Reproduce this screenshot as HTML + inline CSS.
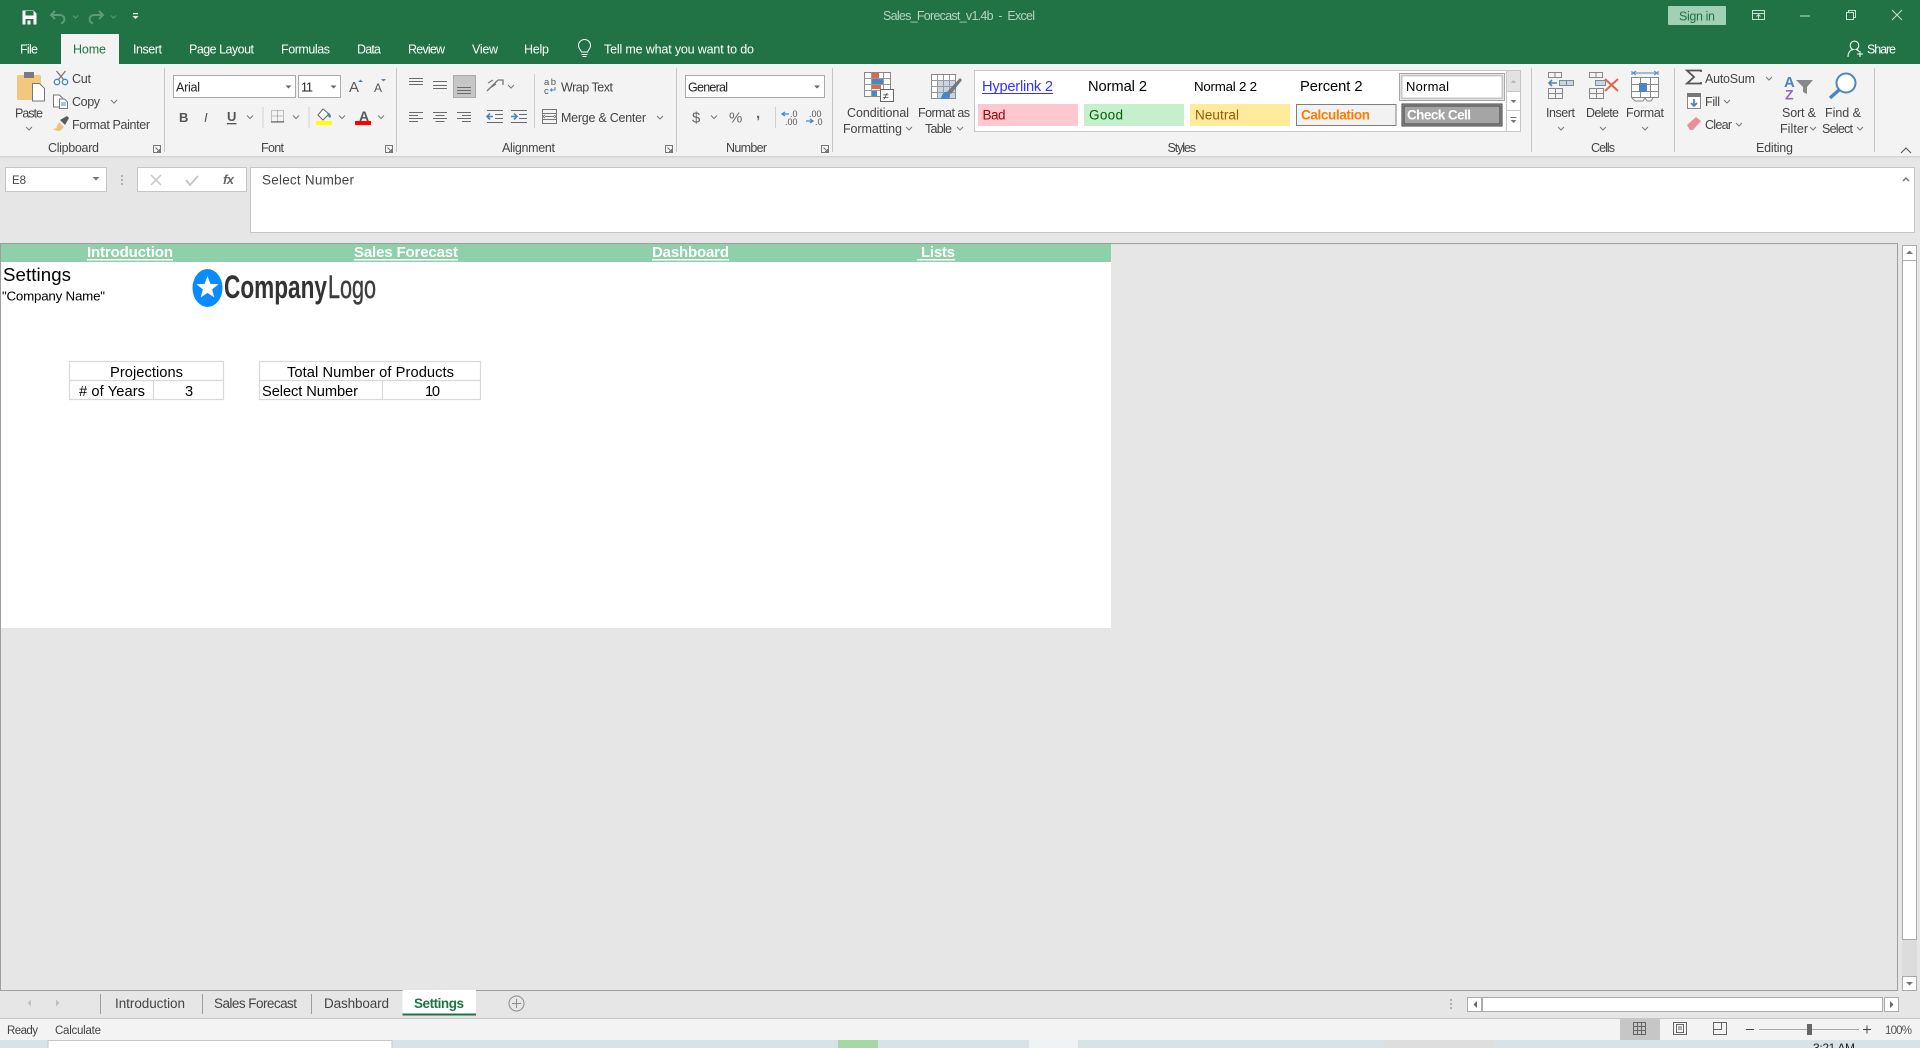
<!DOCTYPE html>
<html lang="en"><head><meta charset="utf-8"><title>Sales_Forecast_v1.4b - Excel</title>
<style>
html,body{margin:0;padding:0;width:1920px;height:1048px;overflow:hidden;background:#e6e6e6}
svg{display:block}
text{font-family:"Liberation Sans",Arial,sans-serif;white-space:pre}
.u{font-size:12.5px;fill:#444}
.t{font-size:12.5px;fill:#fff}
.a{font-size:14.67px;fill:#000}
.n{font-size:15px;font-weight:bold;fill:#fff}
.l{fill:none;stroke:#6a6a6a;stroke-width:1}
.c{fill:none;stroke:#777;stroke-width:1}
.b{fill:#fff;stroke:#ababab;stroke-width:1}
</style></head><body>
<svg width="1920" height="1048" viewBox="0 0 1920 1048" xmlns="http://www.w3.org/2000/svg" shape-rendering="geometricPrecision">
<!-- backgrounds -->
<rect width="1920" height="1048" fill="#e6e6e6"/>
<rect width="1920" height="64" fill="#217346"/>
<rect y="64" width="1920" height="92" fill="#f3f3f3"/>
<rect y="156" width="1920" height="1.5" fill="#d4d4d4"/>

<!-- QAT -->
<path d="M22.5 10.5h11l3 3v11h-14z" fill="#fff"/><rect x="25.5" y="11" width="8" height="4.5" fill="#217346"/><rect x="25.5" y="19" width="8" height="5.5" fill="#217346"/><rect x="27.5" y="20.5" width="3" height="4" fill="#fff"/>
<path d="M55 11l-4 4 4 4M51.5 15h8c6 0 6.5 7 1.5 8.5" fill="none" stroke="#5f9a7a" stroke-width="2"/>
<path d="M73 15.5l2.5 2.5 2.5-2.5" fill="none" stroke="#5f9a7a"/>
<path d="M99 11l4 4-4 4M102.5 15h-8c-6 0-6.5 7-1.5 8.5" fill="none" stroke="#5f9a7a" stroke-width="2"/>
<path d="M111 15.5l2.5 2.5 2.5-2.5" fill="none" stroke="#5f9a7a"/>
<rect x="133" y="13" width="5" height="1.2" fill="#fff"/><path d="M132.5 16h6l-3 3z" fill="#fff"/>

<!-- title -->
<text x="883" y="20" font-size="12.5" fill="#b4d3c1" textLength="152">Sales_Forecast_v1.4b  -  Excel</text>
<rect x="1668" y="6" width="58" height="19" rx="1" fill="#a1d1b4"/>
<text x="1679" y="20.5" font-size="12.5" fill="#217346" textLength="36">Sign in</text>
<rect x="1752.5" y="10.5" width="12" height="9" fill="none" stroke="#c9dfd2"/><path d="M1752 13.5h13M1758.5 19v-4M1756.5 16.5l2-2 2 2" fill="none" stroke="#c9dfd2"/>
<rect x="1800" y="15.5" width="10" height="1" fill="#c9dfd2"/>
<path d="M1846.5 12.5h7v7h-7zM1848.5 12.5v-2h7v7h-2" fill="none" stroke="#c9dfd2"/>
<path d="M1892 10l10 10M1902 10l-10 10" stroke="#c9dfd2" fill="none"/>

<!-- tabs -->
<rect x="61" y="34" width="58" height="30" fill="#f3f3f3"/>
<text class="t" x="20" y="53.5" textLength="18">File</text>
<text x="73" y="53.5" font-size="12.5" fill="#217346" textLength="33">Home</text>
<text class="t" x="133" y="53.5" textLength="29">Insert</text>
<text class="t" x="189" y="53.5" textLength="65">Page Layout</text>
<text class="t" x="281" y="53.5" textLength="49">Formulas</text>
<text class="t" x="357" y="53.5" textLength="24">Data</text>
<text class="t" x="408" y="53.5" textLength="37">Review</text>
<text class="t" x="472" y="53.5" textLength="26">View</text>
<text class="t" x="524" y="53.5" textLength="25">Help</text>
<path d="M581.5 52c-1-2.500-3-3.500-3-6.500a6 6 0 0 1 12 0c0 3-2 4-3 6.500zM581.500 54.500h6M582.500 56.500h4" fill="none" stroke="#fff"/>
<text class="t" x="604" y="53.5" textLength="150">Tell me what you want to do</text>
<path d="M1848 57c0-5 2.500-7 5-7.500a4.300 4.300 0 1 1 3 0c1.500.4 2.500 1 3 2M1857 54h6M1860 51v6" fill="none" stroke="#fff"/>
<text class="t" x="1867" y="53.5" textLength="29">Share</text>

<!-- group separators -->
<g fill="#c6c6c6"><rect x="164" y="68" width="1" height="84"/><rect x="396" y="68" width="1" height="84"/><rect x="676" y="68" width="1" height="84"/><rect x="832" y="68" width="1" height="84"/><rect x="1531" y="68" width="1" height="84"/><rect x="1674" y="68" width="1" height="84"/><rect x="1874" y="68" width="1" height="84"/></g>

<!-- Clipboard -->
<rect x="17" y="75" width="24" height="25" rx="1.500" fill="#f0c97f"/><rect x="24" y="72" width="10" height="6" fill="#7a7a7a"/>
<path d="M32.500 83.500h7l5 5v12.500h-12z" fill="#fff" stroke="#777"/>
<text class="u" x="15" y="117.500" textLength="28">Paste</text><path class="c" d="M26 127l3 3 3-3"/>
<circle cx="57" cy="82" r="2.700" fill="none" stroke="#4a87c0" stroke-width="1.300"/><circle cx="65" cy="82" r="2.700" fill="none" stroke="#4a87c0" stroke-width="1.300"/>
<path d="M56.500 71l7.500 9M65.500 71l-7.500 9" stroke="#777" stroke-width="1.300" fill="none"/>
<text class="u" x="72" y="83" textLength="19">Cut</text>
<path d="M53.500 95h6l3 3v9h-9z" fill="#fff" stroke="#777"/><path d="M59.500 99h5l3 3v6.500h-8z" fill="#fff" stroke="#777"/><path d="M61 103h5M61 105h5" stroke="#4a87c0"/>
<text class="u" x="72" y="106" textLength="28">Copy</text><path class="c" d="M111 100l3 3 3-3"/>
<path d="M59 122l5 5-4 4c-3 0-6-1-7-2 2 0 4-1 4-3z" fill="#edc27c"/><path d="M60 120l7-4 2 2-4 7z" fill="#5b5b5b"/>
<text class="u" x="72" y="129" textLength="78">Format Painter</text>
<text class="u" x="48" y="152" textLength="51">Clipboard</text>
<path d="M153.500 145.500h7v7h-7zM155.500 147.500l4 4M159.500 149v2.500h-2.500" fill="none" stroke="#777"/>

<!-- Font -->
<rect class="b" x="173.500" y="75.500" width="122" height="22"/><rect class="b" x="298.500" y="75.500" width="42" height="22"/>
<text x="176" y="91.500" font-size="12.500" fill="#222" textLength="24">Arial</text>
<text x="301" y="91.500" font-size="12.500" fill="#222" textLength="12">11</text>
<path d="M285.500 85.500h6l-3 3z" fill="#666"/><path d="M330.500 85.500h6l-3 3z" fill="#666"/>
<text x="349" y="92" font-size="15" fill="#555" textLength="10">A</text><path d="M358 82h5l-2.500-2.500z" fill="#4a87c0"/>
<text x="374" y="92" font-size="12" fill="#555" textLength="9">A</text><path d="M381 79h5l-2.500 2.500z" fill="#4a87c0"/>
<text x="179" y="122" font-size="13" font-weight="bold" fill="#555" textLength="9">B</text>
<text x="204" y="122" font-size="13" font-style="italic" fill="#555" textLength="7" font-family="Liberation Serif">I</text>
<text x="227" y="121" font-size="13" font-weight="bold" fill="#555" textLength="9">U</text><rect x="227" y="123" width="9.500" height="1.300" fill="#555"/>
<path class="c" d="M247 115.500l3 3 3-3"/>
<rect x="262.500" y="107" width="1" height="21" fill="#d0d0d0"/>
<path d="M271.500 110.500h12v11h-12zM277.500 110.500v11M271.500 116h12" fill="none" stroke="#888" stroke-dasharray="1 1"/><rect x="271" y="121.500" width="13" height="1" fill="#555"/>
<path class="c" d="M293 115.500l3 3 3-3"/>
<rect x="308.500" y="107" width="1" height="21" fill="#d0d0d0"/>
<path d="M323 109l-5 6 5 5 6-6z" fill="#fff" stroke="#666"/><path d="M327 113c2-1 4 1 4 4-1 1-2 1-3-1z" fill="#4a87c0"/><rect x="316" y="121" width="16" height="4" fill="#ff0"/>
<path class="c" d="M339 115.500l3 3 3-3"/>
<text x="359" y="121" font-size="14" font-weight="bold" fill="#555" textLength="10">A</text><rect x="355" y="121" width="16" height="4" fill="#f00"/>
<path class="c" d="M378 115.500l3 3 3-3"/>
<text class="u" x="261" y="152" textLength="23">Font</text>
<path d="M385.500 145.500h7v7h-7zM387.500 147.500l4 4M391.500 149v2.500h-2.500" fill="none" stroke="#777"/>

<!-- Alignment -->
<path class="l" d="M409 78.500h14M409 81.500h14M409 84.500h14M433 81.500h14M433 85.500h14M433 88.500h14"/>
<rect x="453.500" y="75.500" width="22" height="22" fill="#c6c6c6" stroke="#ababab"/>
<path class="l" d="M457 87.500h14M457 90.500h14M457 93.500h14"/>
<path class="l" d="M409 112.500h14M409 115.500h9M409 118.500h14M409 121.500h9M433 112.500h14M435.500 115.500h9M433 118.500h14M435.500 121.500h9M457 112.500h14M462 115.500h9M457 118.500h14M462 121.500h9"/>
<path d="M487 91l11-11M498 80h5v5M488 83l5-3M490 88l6-4" fill="none" stroke="#777" stroke-width="1.300"/><path class="c" d="M508 85l3 3 3-3"/>
<path d="M487 116.500h6M490 113.500l-3 3 3 3" fill="none" stroke="#4a87c0" stroke-width="1.600"/><path class="l" d="M487 110.500h16M495 114.500h8M495 118.500h8M487 122.500h16"/>
<path d="M511 116.500h6M514 113.500l3 3-3 3" fill="none" stroke="#4a87c0" stroke-width="1.600"/><path class="l" d="M511 110.500h16M519 114.500h8M519 118.500h8M511 122.500h16"/>
<rect x="534" y="74" width="1" height="54" fill="#d0d0d0"/>
<text x="544" y="85" font-size="9.500" fill="#555" textLength="12">ab</text><text x="544" y="94" font-size="9.500" fill="#555">c</text><path d="M555 87v3h-4M552 88.500l-1.500 1.500 1.500 1.500" fill="none" stroke="#4a87c0"/>
<text class="u" x="561" y="91.500" textLength="52">Wrap Text</text>
<path d="M542.500 109.500h14v14h-14zM542.500 113.500h14M542.500 119.500h14M545 116.500h9M545 115l-2 1.500 2 1.500M554 115l2 1.500-2 1.500" fill="none" stroke="#777"/>
<text class="u" x="561" y="122" textLength="85">Merge &amp; Center</text><path class="c" d="M657 116l3 3 3-3"/>
<text class="u" x="502" y="152" textLength="53">Alignment</text>
<path d="M665.500 145.500h7v7h-7zM667.500 147.500l4 4M671.500 149v2.500h-2.500" fill="none" stroke="#777"/>

<!-- Number -->
<rect class="b" x="685.500" y="75.500" width="139" height="22"/>
<text x="688" y="91.500" font-size="12.500" fill="#222" textLength="40">General</text><path d="M814 85.500h6l-3 3z" fill="#666"/>
<text x="692" y="122.500" font-size="15" fill="#666" textLength="10">$</text><path class="c" d="M711 115.500l3 3 3-3"/>
<text x="729" y="122.500" font-size="15" fill="#666" textLength="13">%</text>
<text x="756" y="118" font-size="15" fill="#666" font-weight="bold">,</text>
<rect x="775" y="107" width="1" height="21" fill="#d0d0d0"/>
<text x="790" y="117" font-size="9" fill="#555">.0</text><text x="785" y="125" font-size="9" fill="#555">.00</text>
<path d="M782 114h7M785 112l-3 2 3 2" fill="none" stroke="#4a87c0" stroke-width="1.300"/>
<text x="809" y="117" font-size="9" fill="#555">.00</text><text x="815" y="125" font-size="9" fill="#555">.0</text>
<path d="M806 121h7M810 119l3 2-3 2" fill="none" stroke="#4a87c0" stroke-width="1.300"/>
<text class="u" x="726" y="152" textLength="41">Number</text>
<path d="M821.500 145.500h7v7h-7zM823.500 147.500l4 4M827.500 149v2.500h-2.500" fill="none" stroke="#777"/>

<!-- Conditional / Format as table -->
<rect x="864.500" y="72.500" width="26" height="24" fill="#fff" stroke="#888"/>
<rect x="872" y="73" width="7" height="5" fill="#d9694a"/><rect x="872" y="79" width="11" height="5" fill="#4a87c0"/><rect x="872" y="85" width="9" height="4" fill="#d9694a"/><rect x="872" y="90" width="5" height="6" fill="#4a87c0"/>
<path d="M871.500 73v24M864 78.500h26M864 84.500h26M864 90.500h26M883.500 73v24" stroke="#999" fill="none"/>
<rect x="880.500" y="89.500" width="13" height="12" fill="#fff" stroke="#666"/>
<text x="882.500" y="100" font-size="11.500" fill="#444">≠</text>
<text class="u" x="847" y="117" textLength="62">Conditional</text>
<text class="u" x="843" y="133" textLength="59">Formatting</text><path class="c" d="M906 127l3 3 3-3"/>
<rect x="931.500" y="74.500" width="24" height="24" fill="#fff" stroke="#888"/><rect x="937" y="80" width="18" height="18" fill="#c5d5ea"/>
<path d="M931 80.500h25M931 86.500h25M931 92.500h25M937.500 75v24M943.500 75v24M949.500 75v24" stroke="#999" fill="none"/>
<path d="M947 92l13-14 2 2-11 14z" fill="#777"/><path d="M945 92c3-1 5 1 5 3l-1 4h-8c0-3 2-6 4-7z" fill="#4a87c0"/>
<text class="u" x="918" y="117" textLength="52">Format as</text>
<text class="u" x="925" y="133" textLength="27">Table</text><path class="c" d="M957 127l3 3 3-3"/>

<!-- Styles gallery -->
<rect x="974.500" y="70.500" width="532" height="61" fill="#fff" stroke="#c6c6c6"/>
<text x="982" y="91" font-size="14.670" fill="#3333ff" textLength="71">Hyperlink 2</text><rect x="982" y="93" width="71" height="1" fill="#3333ff"/>
<text x="1088" y="91" font-size="14.670" fill="#000" textLength="59">Normal 2</text>
<text x="1194" y="91" font-size="13.300" fill="#000" textLength="63">Normal 2 2</text>
<text x="1300" y="91" font-size="14.670" fill="#000" textLength="62.500">Percent 2</text>
<rect x="1399.500" y="73.500" width="105" height="27" fill="#fff" stroke="#a5a5a5"/><rect x="1401.500" y="75.500" width="101" height="23" fill="#fff" stroke="#c6c6c6" stroke-width="2"/>
<text x="1406" y="91" font-size="13" fill="#000" textLength="43">Normal</text>
<rect x="978" y="104" width="100" height="22" fill="#ffc7ce"/><text x="982.500" y="119.500" font-size="13.500" fill="#9c0006" textLength="23">Bad</text>
<rect x="1084" y="104" width="100" height="22" fill="#c6efce"/><text x="1089" y="119.500" font-size="13.500" fill="#006100" textLength="34">Good</text>
<rect x="1190" y="104" width="100" height="22" fill="#ffeb9c"/><text x="1195" y="119.500" font-size="13.500" fill="#9c5700" textLength="44">Neutral</text>
<rect x="1296.500" y="104.500" width="99.500" height="21" fill="#f2f2f2" stroke="#7f7f7f"/><text x="1301" y="119.500" font-size="13.500" font-weight="bold" fill="#fa7d00" textLength="69">Calculation</text>
<rect x="1402" y="104" width="100" height="22" fill="#a5a5a5" stroke="#3f3f3f" stroke-width="1"/><rect x="1404" y="106" width="96" height="18" fill="none" stroke="#3f3f3f"/>
<text x="1407" y="119.500" font-size="13.500" font-weight="bold" fill="#fff" textLength="64">Check Cell</text>
<rect x="1506.500" y="70.500" width="14" height="21" fill="#e2e2e2" stroke="#c6c6c6"/><rect x="1506.500" y="91.500" width="14" height="19" fill="#fff" stroke="#c6c6c6"/><rect x="1506.500" y="110.500" width="14" height="21" fill="#fff" stroke="#c6c6c6"/>
<path d="M1510.500 83l3-3 3 3z" fill="#bbb"/><path d="M1510.500 100h6l-3 3z" fill="#777"/><rect x="1510.500" y="117" width="6" height="1" fill="#777"/><path d="M1510.500 120h6l-3 3z" fill="#777"/>
<text class="u" x="1167.500" y="152" textLength="28.500">Styles</text>

<!-- Cells -->
<g fill="none" stroke="#888"><path d="M1548.500 72.500h13v5h-13zM1555 72.500v5M1548.500 88.500h14v10h-14zM1555.500 88.500v10M1548.500 93.500h14"/>
<path d="M1559.500 80.500h14v5h-14zM1566.500 80.500v5" fill="#c5d5ea"/></g>
<path d="M1549 83h8M1552 80l-3 3 3 3" fill="none" stroke="#4a87c0" stroke-width="1.600"/>
<text class="u" x="1546" y="117" textLength="29">Insert</text><path class="c" d="M1558 127l3 3 3-3"/>
<g fill="none" stroke="#888"><path d="M1589.500 72.500h13v5h-13zM1596 72.500v5M1589.500 88.500h14v10h-14zM1596.500 88.500v10M1589.500 93.500h14"/>
<path d="M1595.500 80.500h10v5h-10z" fill="#c5d5ea"/></g>
<path d="M1605 79l13 12M1618 79l-13 12" stroke="#d9694a" stroke-width="2" fill="none"/>
<text class="u" x="1586" y="117" textLength="33">Delete</text><path class="c" d="M1600 127l3 3 3-3"/>
<path d="M1631.500 77.500h27v20h-27zM1640.500 77.500v20M1650.500 77.500v20M1631.500 84.500h27M1631.500 91.500h27" fill="#fff" stroke="#888"/>
<rect x="1639" y="83" width="8" height="9" fill="#4a87c0"/>
<path d="M1632 73h26M1632 71v4M1658 71v4M1636 71l-3 2 3 2M1654 71l3 2-3 2" fill="none" stroke="#4a87c0"/>
<path d="M1632 98l3 3h8l2-3 2 3h4l2-3" fill="none" stroke="#888"/>
<text class="u" x="1626" y="117" textLength="38">Format</text><path class="c" d="M1642 127l3 3 3-3"/>
<text class="u" x="1591" y="152" textLength="24">Cells</text>

<!-- Editing -->
<path d="M1701 72v-1.500h-14l7 6.500-7 6.500h14V82" fill="none" stroke="#555" stroke-width="1.800"/>
<text class="u" x="1705" y="83" textLength="50">AutoSum</text><path class="c" d="M1766 77l3 3 3-3"/>
<rect x="1687.500" y="93.500" width="13" height="15" fill="#fff" stroke="#888"/><rect x="1687" y="93" width="14" height="4" fill="#777"/><path d="M1694 99v7M1691 103l3 3 3-3" fill="none" stroke="#4a87c0" stroke-width="1.800"/>
<text class="u" x="1705" y="106" textLength="15">Fill</text><path class="c" d="M1724 100l3 3 3-3"/>
<path d="M1687 125l9-8 5 4-8 9h-3z" fill="#ec8d9c"/>
<text class="u" x="1705" y="129" textLength="27">Clear</text><path class="c" d="M1736 123l3 3 3-3"/>
<text x="1784" y="87" font-size="15" font-weight="bold" fill="#4a87c0" textLength="11">A</text>
<text x="1785" y="99.500" font-size="14" font-weight="bold" fill="#9966bb" textLength="10">Z</text>
<path d="M1796 80h17l-6 7v7l-4-2v-5z" fill="#888"/>
<text class="u" x="1782" y="117" textLength="34">Sort &amp;</text>
<text class="u" x="1780" y="133" textLength="28">Filter</text><path class="c" d="M1810 127l3 3 3-3"/>
<circle cx="1846" cy="83" r="9.500" fill="#fff" stroke="#4a87c0" stroke-width="2"/><path d="M1839 90l-9 8" stroke="#4a87c0" stroke-width="3.500" fill="none"/>
<text class="u" x="1825" y="117" textLength="36">Find &amp;</text>
<text class="u" x="1822" y="133" textLength="31">Select</text><path class="c" d="M1857 127l3 3 3-3"/>
<text class="u" x="1756" y="152" textLength="37">Editing</text>
<path d="M1901 153l5-5 5 5" fill="none" stroke="#555"/>

<!-- Formula bar -->
<rect x="5.500" y="167.500" width="101" height="24" fill="#fff" stroke="#c6c6c6"/>
<text x="12" y="184" font-size="11.500" fill="#444" textLength="14">E8</text>
<path d="M92.500 177h7l-3.500 3.500z" fill="#777"/>
<g fill="#b0b0b0"><rect x="121" y="175" width="2" height="2"/><rect x="121" y="179" width="2" height="2"/><rect x="121" y="183" width="2" height="2"/></g>
<rect x="137.500" y="167.500" width="109" height="24" fill="#fff" stroke="#c6c6c6"/>
<path d="M151 175l10 10M161 175l-10 10" stroke="#c6c6c6" stroke-width="1.500" fill="none"/>
<path d="M186 180l4 5 8-9" stroke="#c6c6c6" stroke-width="2" fill="none"/>
<text x="223" y="184" font-size="13" font-style="italic" fill="#666" font-family="Liberation Serif" font-weight="bold" textLength="11">fx</text>
<rect x="250.500" y="167.500" width="1664" height="65" fill="#fff" stroke="#c6c6c6"/>
<text x="262" y="184.500" font-size="13.500" fill="#444" textLength="92">Select Number</text>
<path d="M1903 181l3-3 3 3" fill="none" stroke="#777" stroke-width="1.500"/>

<!-- Sheet -->
<rect x="0" y="243" width="1898" height="1" fill="#9e9e9e"/>
<rect x="0" y="243" width="1" height="748" fill="#9e9e9e"/>
<rect x="1897" y="243" width="1" height="748" fill="#9e9e9e"/>
<rect x="0" y="990" width="1898" height="1" fill="#9e9e9e"/>
<rect x="1" y="244" width="1110" height="384" fill="#fff"/>
<rect x="1" y="244" width="1110" height="18" fill="#8fd0ab"/>
<text class="n" x="87" y="257" textLength="86">Introduction</text><rect x="87" y="259" width="86" height="1.500" fill="#fff"/>
<text class="n" x="354" y="257" textLength="104">Sales Forecast</text><rect x="354" y="259" width="104" height="1.500" fill="#fff"/>
<text class="n" x="652" y="257" textLength="77">Dashboard</text><rect x="652" y="259" width="77" height="1.500" fill="#fff"/>
<text class="n" x="921" y="257" textLength="34">Lists</text><rect x="917" y="259" width="38" height="1.500" fill="#fff"/>
<text x="3" y="281" font-size="18.670" fill="#000" textLength="68">Settings</text>
<text x="2" y="300.500" font-size="13.330" fill="#000" textLength="103">"Company Name"</text>
<!-- logo -->
<ellipse cx="207.500" cy="288" rx="15" ry="19" fill="#0a8cff"/>
<path d="M207.500 276l2.900 7.900 8.100.4-6.400 5.100 2.200 8-6.800-4.500-6.800 4.500 2.200-8-6.400-5.100 8.100-.4z" fill="#fff"/>
<text x="224" y="298" font-size="32" font-weight="bold" fill="#333" textLength="103" lengthAdjust="spacingAndGlyphs">Company</text>
<text x="328" y="298" font-size="32" fill="#3d3d3d" stroke="#3d3d3d" stroke-width=".5" textLength="48" lengthAdjust="spacingAndGlyphs">Logo</text>
<!-- tables -->
<path d="M69.500 361.500h154v38h-154zM69.500 380.500h154M153.500 380.500v19M259.500 361.500h221v38h-221zM259.500 380.500h221M382.500 380.500v19" fill="none" stroke="#d9d9d9" stroke-width="1.200"/>
<text class="a" x="110" y="377" textLength="73">Projections</text>
<text class="a" x="79" y="396" textLength="66"># of Years</text>
<text class="a" x="185" y="396">3</text>
<text class="a" x="287" y="377" textLength="167">Total Number of Products</text>
<text class="a" x="262" y="396" textLength="96">Select Number</text>
<text class="a" x="425" y="396" textLength="15">10</text>

<!-- vertical scrollbar -->
<rect x="1902.500" y="245.500" width="14" height="15" fill="#fff" stroke="#ababab"/><path d="M1906 254l3.500-3.500 3.500 3.500z" fill="#777"/>
<rect x="1902" y="260" width="15" height="716" fill="#dcdcdc"/>
<rect x="1902.500" y="260.500" width="14" height="679" fill="#fff" stroke="#ababab"/>
<rect x="1902.500" y="976.500" width="14" height="14" fill="#fff" stroke="#ababab"/><path d="M1906 982h7l-3.500 3.500z" fill="#777"/>

<!-- sheet tabs -->
<rect y="991" width="1920" height="27" fill="#e6e6e6"/>
<path d="M31 999.500v7l-3.500-3.500z" fill="#c0c0c0"/><path d="M56 999.500v7l3.500-3.500z" fill="#c0c0c0"/>
<g fill="#9e9e9e"><rect x="100" y="994" width="1" height="20"/><rect x="202" y="994" width="1" height="20"/><rect x="311" y="994" width="1" height="20"/></g>
<text class="u" x="115" y="1008" textLength="70" style="font-size:13.500px">Introduction</text>
<text class="u" x="214" y="1008" textLength="83" style="font-size:13.500px">Sales Forecast</text>
<text class="u" x="324" y="1008" textLength="65" style="font-size:13.500px">Dashboard</text>
<rect x="402.500" y="990" width="73.500" height="25" fill="#fff"/><rect x="402.500" y="1013.500" width="73.500" height="2" fill="#217346"/>
<text x="414" y="1008" font-size="13.500" font-weight="bold" fill="#217346" textLength="50">Settings</text>
<circle cx="516.500" cy="1003.500" r="7.500" fill="none" stroke="#8a8a8a"/><path d="M512 1003.500h9M516.500 999v9" stroke="#8a8a8a" fill="none"/>
<g fill="#b0b0b0"><rect x="1450" y="999" width="2" height="2"/><rect x="1450" y="1003" width="2" height="2"/><rect x="1450" y="1007" width="2" height="2"/></g>
<rect x="1467.500" y="997.500" width="14" height="14" fill="#fff" stroke="#ababab"/><path d="M1477 1001v7l-3.500-3.500z" fill="#666"/>
<rect x="1482.500" y="997.500" width="400" height="14" fill="#fff" stroke="#ababab"/>
<rect x="1884.500" y="997.500" width="14" height="14" fill="#fff" stroke="#ababab"/><path d="M1890 1001v7l3.500-3.500z" fill="#666"/>

<!-- status bar -->
<rect y="1018" width="1920" height="1" fill="#c6c6c6"/>
<rect y="1019" width="1920" height="21" fill="#f3f3f3"/>
<text x="7" y="1034" font-size="11.500" fill="#444" textLength="31">Ready</text>
<text x="55" y="1034" font-size="11.500" fill="#444" textLength="46">Calculate</text>
<rect x="1620" y="1019" width="40" height="21" fill="#c6c6c6"/>
<path d="M1633.500 1022.500h12v12h-12zM1637.500 1022.500v12M1641.500 1022.500v12M1633.500 1026.500h12M1633.500 1030.500h12" fill="none" stroke="#666"/>
<rect x="1673.500" y="1022.500" width="13" height="12" fill="none" stroke="#666"/><rect x="1676.500" y="1024.500" width="7" height="8" fill="none" stroke="#666"/><path d="M1678 1027h4M1678 1029h4" stroke="#666"/>
<path d="M1713.500 1022.500h13v12h-13zM1713.500 1029.500h8v-7" fill="none" stroke="#666"/>
<rect x="1746" y="1029" width="8" height="1" fill="#444"/>
<rect x="1759" y="1029" width="100" height="1" fill="#aaa"/>
<rect x="1807" y="1024" width="5" height="11" fill="#666"/>
<path d="M1863 1029.500h8M1867 1025.500v8" stroke="#444" fill="none"/>
<text x="1885" y="1034" font-size="11.500" fill="#555" textLength="27">100%</text>

<!-- desktop strip -->
<rect y="1040" width="1920" height="8" fill="#d6e4ea"/>
<rect x="1384" y="1040" width="110" height="8" fill="#dcdfdd"/>
<rect x="48" y="1040.500" width="344" height="8" fill="#fff" stroke="#c6c6c6"/>
<rect x="838" y="1040" width="40" height="8" fill="#a3d9a3"/>
<rect x="1029" y="1040" width="49" height="8" fill="#eef3f6"/>
<text x="1813" y="1052" font-size="12" fill="#222" textLength="42">3:21 AM</text>
</svg>
</body></html>
